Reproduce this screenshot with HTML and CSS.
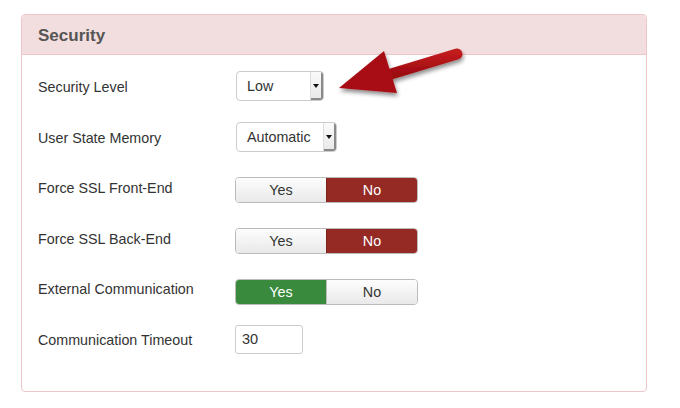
FILE: index.html
```html
<!DOCTYPE html>
<html>
<head>
<meta charset="utf-8">
<link rel="stylesheet" href="styles.css">
</head>
<body>
<div class="panel">
  <div class="panel-head">Security</div>
  <div class="panel-body">
    <div class="row">
      <div class="label">Security Level</div>
      <div class="select sel-low"><span class="sel-text">Low</span><span class="sel-btn"><span class="caret"></span></span></div>
    </div>
    <div class="row">
      <div class="label">User State Memory</div>
      <div class="select sel-auto"><span class="sel-text">Automatic</span><span class="sel-btn"><span class="caret"></span></span></div>
    </div>
    <div class="row">
      <div class="label">Force SSL Front-End</div>
      <div class="toggle"><span class="opt">Yes</span><span class="opt no-on">No</span></div>
    </div>
    <div class="row">
      <div class="label">Force SSL Back-End</div>
      <div class="toggle"><span class="opt">Yes</span><span class="opt no-on">No</span></div>
    </div>
    <div class="row">
      <div class="label">External Communication</div>
      <div class="toggle t5"><span class="opt yes-on">Yes</span><span class="opt">No</span></div>
    </div>
    <div class="row">
      <div class="label">Communication Timeout</div>
      <div class="input">30</div>
    </div>
  </div>
</div>
<svg class="arrow" width="680" height="408" viewBox="0 0 680 408">
  <defs>
    <filter id="sh" x="-20%" y="-20%" width="140%" height="160%">
      <feDropShadow dx="1" dy="3" stdDeviation="2" flood-color="#000" flood-opacity="0.45"/>
    </filter>
    <linearGradient id="rg" x1="0" y1="0" x2="0" y2="1">
      <stop offset="0" stop-color="#c01a1e"/>
      <stop offset="1" stop-color="#9c0c10"/>
    </linearGradient>
  </defs>
  <g filter="url(#sh)">
    <line x1="391" y1="74" x2="457" y2="54" stroke="url(#rg)" stroke-width="11" stroke-linecap="round"/>
    <polygon points="339,88 384,51 397,93" fill="#a81014"/>
  </g>
</svg>
</body>
</html>
```
FILE: styles.css
```css
html, body {
  margin: 0;
  padding: 0;
  background: #fff;
}
body {
  font-family: "Liberation Sans", Arial, sans-serif;
  color: #333;
  font-size: 14px;
  padding: 14px 0 0 21px;
  width: 680px;
  height: 408px;
  box-sizing: border-box;
  position: relative;
}
.panel {
  width: 626px;
  height: 378px;
  box-sizing: border-box;
  border: 1px solid #ecc6cb;
  border-radius: 4px;
  overflow: hidden;
}
.panel-head {
  height: 40px;
  box-sizing: border-box;
  background: #f2dede;
  border-bottom: 1px solid #ecc6cb;
  padding-left: 16px;
  font-size: 17px;
  font-weight: bold;
  color: #555;
  line-height: 41px;
}
.panel-body {
  padding: 16px 0 0 16px;
}
.row {
  display: flex;
  align-items: flex-start;
  height: 50.6px;
}
.label {
  width: 197px;
  line-height: 33px;
  font-size: 14.3px;
  color: #333;
  flex: none;
}
.select {
  margin-left: 1px;
  height: 30px;
  box-sizing: border-box;
  border: 1px solid #ccc;
  border-radius: 4px;
  display: flex;
  background: #fff;
  overflow: hidden;
}
.sel-low { width: 88px; }
.sel-auto { width: 101px; margin-top: 0.5px; }
.sel-text {
  flex: 1;
  padding-left: 10px;
  line-height: 29px;
  font-size: 14.3px;
  color: #333;
}
.sel-btn {
  width: 13px;
  box-sizing: border-box;
  border-left: 1px solid #ddd;
  background: linear-gradient(#fafafa, #e8e8e8);
  box-shadow: inset -2px -2px 0 #8a8a8a;
  display: flex;
  align-items: center;
  justify-content: center;
  padding-right: 2px;
}
.caret {
  width: 0;
  height: 0;
  border-left: 3px solid transparent;
  border-right: 3px solid transparent;
  border-top: 4px solid #111;
}
.toggle {
  margin-top: 5px;
  width: 183px;
  height: 26px;
  box-sizing: border-box;
  border: 1px solid #bbb;
  border-radius: 4px;
  display: flex;
  overflow: hidden;
}
.t5 { margin-top: 5.5px; }
.opt {
  flex: 1;
  text-align: center;
  line-height: 24px;
  font-size: 14.3px;
  color: #333;
  background: linear-gradient(#fdfdfd, #e9e9e9);
}
.opt + .opt {
  border-left: 1px solid #bbb;
}
.no-on {
  background: #952a25;
  color: #fff;
  border-left-color: #7d1f1b !important;
}
.yes-on {
  background: #3a8a3d;
  color: #fff;
}
.input {
  margin-top: 1px;
  width: 68px;
  height: 29px;
  box-sizing: border-box;
  border: 1px solid #ccc;
  border-radius: 3px;
  padding-left: 6px;
  line-height: 27px;
  font-size: 14.5px;
  color: #333;
}
.arrow {
  position: absolute;
  left: 0;
  top: 0;
  pointer-events: none;
}
```
